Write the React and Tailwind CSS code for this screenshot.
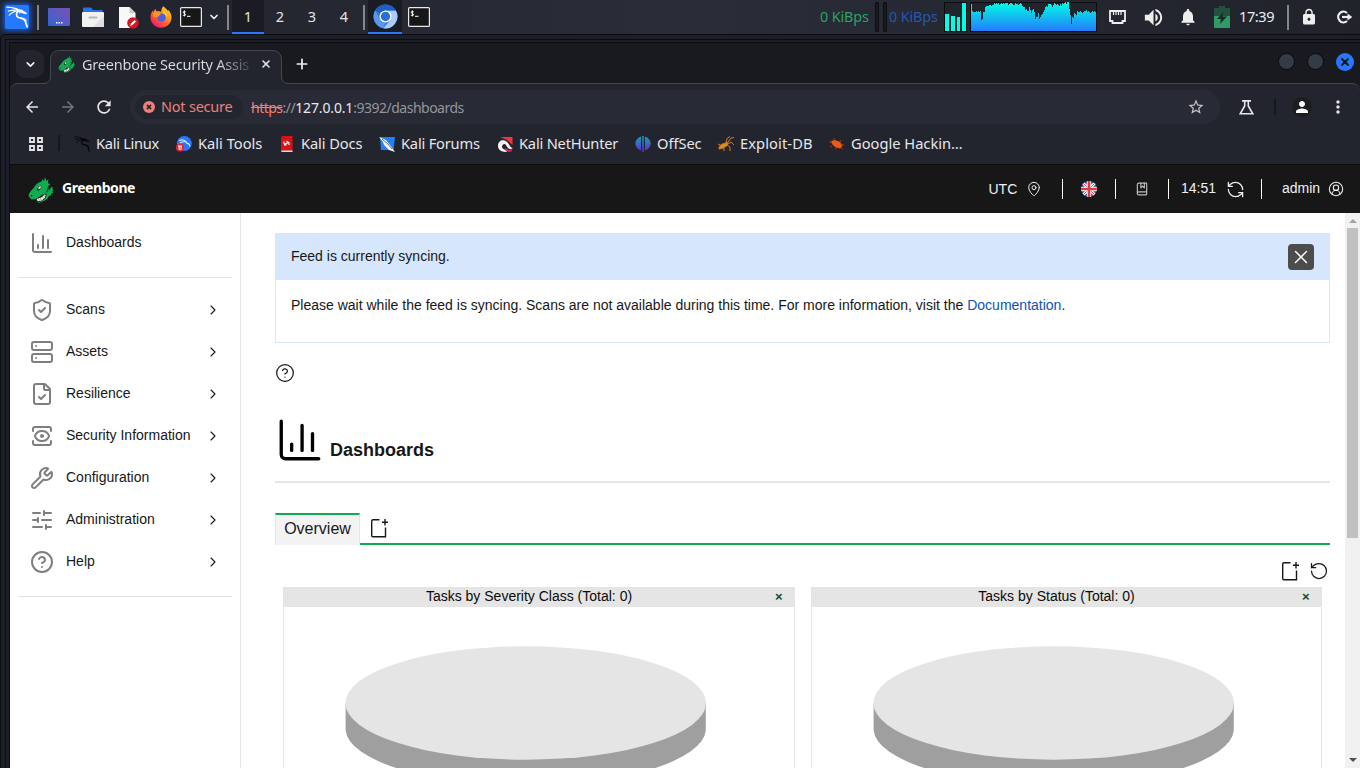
import React from "react";
import {
  ChartColumn, ShieldCheck, Server, FileCheck, View, Wrench, SlidersHorizontal,
  CircleHelp, ChevronRight, ChevronDown, MapPin, BookMarked, RefreshCcw,
  CircleUserRound, RotateCcw, X, Plus,
} from "lucide-react";
import {
  MdArrowBack, MdArrowForward, MdRefresh, MdStarBorder, MdMoreVert, MdPerson,
  MdVolumeUp, MdNotifications, MdLock,
} from "react-icons/md";

const UI = "font-['Noto_Sans',sans-serif]";
const WEB = "font-['Liberation_Sans',Arial,sans-serif]";

function Sep({ className }) {
  return <div className={`h-[25px] w-[2px] shrink-0 bg-[#84868b] ${className}`} />;
}

function KaliDragon({ size, className }) {
  return (
    <svg className={className} width={size} height={size} viewBox="0 0 24 24" fill="none" stroke="currentColor" strokeLinecap="round">
      <path d="M1 1.200C6 1.500 11 2.300 14 4.300M2.500 5.500c4-1.200 8-1.300 11.500-.8M3.500 10c3-3 6.500-4.800 10.500-5" strokeWidth="1.300" />
      <path d="M14 4.500c-3 2.500-3.500 6.500-.5 8 3 1.200 5.500.5 7.200 3.500 1 2 1.300 4 2.300 6.500" strokeWidth="1.900" />
      <path d="M14 4.500c2-.8 4 0 5 1.200l3.500 2-.7 1-3-.9c-1.500-.6-2.500-.8-4-.3Z" fill="currentColor" strokeWidth=".8" />
      <path d="M17 13c2 .2 3.800 1 5.500 2.600" strokeWidth="1" />
    </svg>
  );
}

function TerminalIcon({ className }) {
  return (
    <svg className={`shrink-0 ${className}`} width="22" height="20" viewBox="0 0 22 20" fill="none">
      <rect x=".6" y=".6" width="20.8" height="18.8" rx="1" fill="#171717" stroke="#e8e8e8" strokeWidth="1.2" />
      <path d="M5.600 4.900C4.900 4.200 3.100 4.300 3.200 5.400S5.600 6.400 5.600 7.600 3.600 8.800 2.800 8M4.400 3.400v6M7 9.300h3.500" stroke="#fff" strokeWidth="1" />
    </svg>
  );
}

function FirefoxIcon({ className }) {
  return (
    <svg className={`shrink-0 ${className}`} width="22" height="22" viewBox="0 0 22 22">
      <defs>
        <linearGradient id="fx" x1="1" y1="0" x2=".2" y2="1">
          <stop offset="0" stopColor="#ffe14a" /><stop offset=".4" stopColor="#ff9a1f" /><stop offset=".75" stopColor="#ff4343" /><stop offset="1" stopColor="#e4127b" />
        </linearGradient>
      </defs>
      <path d="M13.500.3c1 1.500 3.300 2.600 4.500 4.700.3-.3.300-.800.200-1.300 2 2 3.300 4.800 3.300 7.800 0 5.800-4.600 10.200-10.500 10.200S.5 17.300.5 11.500C.5 8.800 1.300 6.300 2.800 4.500l.5 1.800C4 4.700 4.600 3.700 5.800 2.700c-.1 1 .2 1.900.8 2.500 1.700-.3 3.400.1 4.600.7C11.200 3.600 12 1.600 13.500.3Z" fill="url(#fx)" />
      <circle cx="11.500" cy="11.500" r="4.300" fill="#4b5fe0" />
      <path d="M3.500 6.500c2-.8 4.500-.5 5.500.3l2 1.400-1.700 1.400-1.500 1.400C6.500 12 6 10 3 11Z" fill="#ff9326" />
      <path d="M12.500 7.200c3 .5 4.500 2.800 4 5.300 1.500-2.800.5-6-2.700-7Z" fill="#ffc934" />
    </svg>
  );
}

function ChromiumIcon() {
  return (
    <svg width="25" height="25" viewBox="0 0 24 24">
      <circle cx="12" cy="12" r="11.500" fill="#3b78d8" />
      <path d="M12 12 2 6.300A11.500 11.500 0 0 1 22 6.300H12Z" fill="#1b60c4" />
      <path d="M2 6.300 7 15l5 3-2 5.300A11.500 11.500 0 0 1 2 6.300Z" fill="#5b95ee" />
      <path d="M12 6.500h10a11.500 11.500 0 0 1-12 16.800L17 15Z" fill="#adcbf8" />
      <circle cx="12" cy="12" r="5.800" fill="#fff" />
      <circle cx="12" cy="12" r="4.500" fill="#2470dd" />
    </svg>
  );
}

const LOAD = [27,20,19,19,19,20,19,20,19,20,11,12,19,19,24,25,25,25,26,26,25,26,26,28,27,28,27,28,26,27,28,27,28,27,28,28,28,26,27,28,28,27,26,26,28,27,27,26,27,28,27,25,24,24,21,22,20,20,24,21,18,21,22,19,12,14,14,18,12,14,16,17,19,21,24,25,24,27,27,27,26,24,26,28,27,26,27,26,25,27,25,28,27,28,29,27,29,29,22,16,7,14,13,18,17,16,20,19,19,20,19,18,19,20,20,21,19,20,19,18,19,20,19,20,19];

function LoadGraph() {
  const pts = LOAD.map((v, i) => `L${i} ${29 - v}h1`).join("");
  return (
    <svg className="ml-[3px] shrink-0" width="127" height="30" viewBox="-1 0 127 30">
      <defs>
        <linearGradient id="load" x1="0" y1="0" x2="0" y2="30" gradientUnits="userSpaceOnUse">
          <stop offset="0" stopColor="#00ffe5" /><stop offset=".5" stopColor="#13bbf0" /><stop offset="1" stopColor="#2777ff" />
        </linearGradient>
      </defs>
      <rect x="-.5" y=".5" width="126" height="29" fill="#22242c" stroke="#0d0e12" />
      <path shapeRendering="crispEdges" d={`M0 29${pts}V29Z`} fill="url(#load)" />
    </svg>
  );
}

function Workspace({ n, active }) {
  return (
    <div className={`flex h-[34px] w-8 items-center justify-center border-b-2 pt-px text-[14.500px] text-[#e4e5e8] ${active ? "border-[#2777ff] bg-[#1a1b23]" : "border-transparent"}`}>
      {n}
    </div>
  );
}

function Panel() {
  return (
    <div className={`flex h-[34px] shrink-0 items-center bg-linear-to-r from-[#20222b] via-[#2a2c38] to-[#20232a] ${UI}`}>
      <div className="ml-[5px] flex size-6 items-center justify-center rounded-[2px] bg-[#2479ff] text-white shadow-[0_0_5px_2px_#1555cc]">
        <KaliDragon size={22} />
      </div>
      <Sep className="ml-2" />
      <div className="ml-[9px] flex h-[18px] w-[22px] items-end justify-center rounded-[1px] bg-linear-to-tr from-[#2464d2] to-[#7650b5] pb-[2px]">
        <svg width="8" height="2"><path d="M1 0h1.500v1.500H1zM3.500 0H5v1.500H3.500zM6 0h1.500v1.500H6z" fill="#fff" /></svg>
      </div>
      <svg className="ml-3 shrink-0" width="22" height="21" viewBox="0 0 22 21">
        <path d="M1 1.500Q1 .5 2 .5h7l2 2.500h9.500v5H1Z" fill="#2674e8" />
        <rect y="5" width="22" height="15" rx="1" fill="#f1f1f1" />
        <path d="m22 9-11 11h10q1 0 1-1Z" fill="#dedede" />
        <rect x="6.500" y="9.500" width="9" height="2" rx="1" fill="#b8b8b8" />
      </svg>
      <svg className="ml-[14px] shrink-0" width="21" height="23" viewBox="0 0 21 23">
        <path d="M1 1h10.500l6 6v15H1Z" fill="#f8f8f8" /><path d="m11.500 1 6 6h-6Z" fill="#c9c9c9" />
        <circle cx="15" cy="17" r="5.800" fill="#d31620" /><path d="m12 20 1-2.500 3.500-3.500 1.500 1.500-3.500 3.500Z" fill="#fff" />
      </svg>
      <FirefoxIcon className="ml-[11px]" />
      <TerminalIcon className="ml-2" />
      <ChevronDown size={12} strokeWidth={3.500} className="ml-[6px] text-[#eee]" />
      <Sep className="ml-[7px]" />
      <div className="ml-[3px] flex">
        <Workspace n="1" active /><Workspace n="2" /><Workspace n="3" /><Workspace n="4" />
      </div>
      <Sep className="ml-[3px]" />
      <div className="ml-[3px] flex h-[34px] w-[34px] items-center justify-center border-b-2 border-[#2777ff] bg-[#1a1b23]">
        <ChromiumIcon />
      </div>
      <TerminalIcon className="ml-[6px]" />
      <div className="ml-auto flex h-[34px] items-center">
        <span className="w-[55px] text-[14.300px] tracking-[-0.1px] whitespace-nowrap text-[#29a567]">0 KiBps</span>
        <div className="h-[30px] w-[4px] rounded-[1px] border border-[#0c0d10] bg-[#1a1b20]" />
        <div className="ml-1 h-[30px] w-[4px] rounded-[1px] border border-[#0c0d10] bg-[#1a1b20]" />
        <span className="ml-[2px] w-[55px] text-[14.300px] tracking-[-0.1px] whitespace-nowrap text-[#2159b2]">0 KiBps</span>
        <div className="flex h-[30px] w-[23px] items-end gap-[2px] border border-[#0d0e12] bg-[#22242c]">
          <div className="h-[17px] w-1 bg-[#00ffe5]" />
          <div className="h-[15px] w-1 bg-[#00ffe5]" />
          <div className="h-[14px] w-1 bg-[#00ffe5]" />
          <div className="h-[28px] w-1 bg-[#00ffe5]" />
        </div>
        <LoadGraph />
        <svg className="ml-[12px]" width="17" height="14" viewBox="0 0 17 14" fill="none" stroke="#eee" strokeWidth="1.800">
          <path d="M1 1h15v10h-2.500v2h-10v-2H1Z" /><path d="M4.500 2v3M7 2v3M9.500 2v3M12 2v3" strokeWidth="1.200" />
        </svg>
        <MdVolumeUp size={23} className="ml-[16px] text-[#eee]" />
        <MdNotifications size={20} className="ml-[13px] text-[#eee]" />
        <svg className="ml-[16px]" width="16" height="23" viewBox="0 0 16 23">
          <path d="M5 0h6v2h5v9H0V2h5Z" fill="#24503f" /><path d="M0 10h16v11q0 1-1 1H1q-1 0-1-1Z" fill="#2f9a64" />
          <path d="M9.500 6 3 13h4l-1 5 7-7.500H8.500Z" fill="#172c27" />
        </svg>
        <span className="ml-[9px] w-[48px] text-[14.500px] tracking-[-0.4px] text-[#eceded]">17:39</span>
        <Sep className="" />
        <MdLock size={18} className="ml-[11px] text-[#eee]" />
        <svg className="mr-[7px] ml-[18px]" width="17" height="14" viewBox="0 0 17 14" fill="none" stroke="#eee" strokeWidth="2.200">
          <path d="M11 3A5.300 5.300 0 1 0 11 11" /><path d="M6 7h6.500" /><path d="m11.500 3.500 4.800 3.500-4.800 3.500Z" fill="#eee" stroke="none" />
        </svg>
      </div>
    </div>
  );
}

function Dragon({ size }) {
  return (
    <svg width={size} height={size} viewBox="0 0 26 26">
      <path d="M.8 19.500C.3 16 3.500 13.500 5.500 11c2-3.500 4.500-5.500 8-6.500L14.500 2l1.500 2L17 0l1.500 4 1.800-2-.3 4.500 2 .3-1.500 4 .5 3.200-3 3c-3 .3-5.500 1.200-7 3.500L7.500 22l-4 .5Z" fill="#11ab51" />
      <path d="m20.500 14.500 2.500-4 2-.8-.7 2.300 1.400 1-1.400 1.500 1 1.300-2 .8-.3 2-2 .2-1.700 3-3.300 2.200-4.500 1.800L9 25l4-1.500c3-1.500 4.500-3.500 5-7Z" fill="#11ab51" />
      <path d="m9 13.500.8-3.200 3.200-1.700.2 2.200-2 2.500Z" fill="#171717" />
      <path d="m10.300 12.600.4-2.500 2-1v2Z" fill="#fff" />
      <path d="M8.300 22.500 10 20.800l3.500-.8 3-3 1.800.5-1 3.500-3.800 3-4 .8Z" fill="#fff" stroke="#171717" strokeWidth=".9" />
      <path d="m10.500 21.500.7 2.200m1.300-2.700.8 2.200m1-3.500 1.200 2m0-3.500 1.500 1.300" stroke="#555" strokeWidth=".6" />
      <circle cx="3.500" cy="18.700" r=".8" fill="#152018" />
      <path d="M20.500 8.500 20 12l-1.800 3.500" stroke="#152018" strokeWidth=".8" fill="none" />
    </svg>
  );
}

function TabStrip() {
  return (
    <div className="flex h-10 shrink-0 items-end bg-[#191a1f]">
      <div className="mb-[5px] ml-[6px] flex size-7 items-center justify-center rounded-[9px] bg-[#23252e]">
        <ChevronDown size={13} strokeWidth={3} className="text-[#eee]" />
      </div>
      <div className="relative z-10 -mb-px ml-[6px] flex h-[34px] w-[232px] items-center rounded-t-[9px] border border-b-0 border-[#45474e] bg-[#23252e] pb-[8px]">
        <svg className="absolute bottom-0 -left-[8px]" width="8" height="8" viewBox="0 0 8 8"><path d="M8 0v8H0Q7.500 7.500 8 0Z" fill="#23252e" /><path d="M0 7.500Q7.500 7.500 7.500 0" fill="none" stroke="#45474e" /></svg>
        <svg className="absolute -right-[8px] bottom-0" width="8" height="8" viewBox="0 0 8 8"><path d="M0 0v8h8Q.5 7.500 0 0Z" fill="#23252e" /><path d="M8 7.500Q.5 7.500.5 0" fill="none" stroke="#45474e" /></svg>
        <span className="mt-[2px] ml-[7px] flex"><Dragon size={17} /></span>
        <span className={`ml-[7px] w-[169px] bg-linear-to-r from-[#dcdde0] from-80% to-[#dcdde020] to-100% bg-clip-text text-[14.500px] leading-[20px] tracking-[-0.22px] whitespace-nowrap text-transparent ${UI}`}>Greenbone Security Assis</span>
        <X size={12} strokeWidth={3.200} className="ml-[9px] text-[#e4e4e6]" />
      </div>
      <Plus size={16} strokeWidth={2.600} className="mb-[11px] ml-[12px] text-[#eee]" />
      <div className="mr-[6px] mb-[12px] ml-auto flex gap-3">
        <span className="size-[17px] rounded-full border border-[#08090b] bg-[#353a47]" />
        <span className="size-[17px] rounded-full border border-[#08090b] bg-[#353a47]" />
        <span className="flex size-[18px] items-center justify-center rounded-full bg-[#2777ff] text-[#10131c]"><X size={12} strokeWidth={4} /></span>
      </div>
    </div>
  );
}

function Toolbar() {
  return (
    <div className={`flex h-12 shrink-0 items-center rounded-t-[8px] border-t border-[#45474e] bg-[#23252e] pb-px ${UI}`}>
      <MdArrowBack size={18} className="ml-[13px] text-[#e6e6e8]" />
      <MdArrowForward size={18} className="ml-[18px] text-[#73757b]" />
      <MdRefresh size={20} className="ml-[17px] text-[#e6e6e8]" />
      <div className="ml-[16px] flex h-[34px] w-[1090px] items-center rounded-full bg-[#282a36]">
        <div className="ml-[5px] flex h-6 w-[108px] items-center rounded-full bg-[#23252e]">
          <svg className="ml-[8px]" width="12" height="12" viewBox="0 0 12 12"><circle cx="6" cy="6" r="6" fill="#ee8079" /><path d="m3.900 3.900 4.200 4.200m0-4.200L3.900 8.100" stroke="#23252e" strokeWidth="1.600" /></svg>
          <span className="ml-[6px] text-[14.500px] tracking-[-0.22px] whitespace-nowrap text-[#e8827c]">Not secure</span>
        </div>
        <span className="ml-[8px] text-[14px] tracking-[-0.5px] whitespace-nowrap text-[#94969c]">
          <span className="text-[#ee8079] line-through">https</span>://<span className="tracking-[-0.15px] text-[#e8e9eb]">127.0.0.1</span>:9392/dashboards
        </span>
        <MdStarBorder size={18} className="mr-[15px] ml-auto text-[#c4c5c9]" />
      </div>
      <svg className="ml-[19px]" width="15" height="15" viewBox="0 0 15 15" fill="none" stroke="#e6e6e8" strokeWidth="1.600"><path d="M3 .9h9M5.700 1v5L1.200 13.800h12.600L9.300 6V1" /></svg>
      <div className="ml-[20px] h-4 w-[2px] bg-[#16171c]" />
      <span className="ml-[16px] flex size-5 items-center justify-center rounded-full bg-[#1c1d1e]"><MdPerson size={18} className="text-white" /></span>
      <MdMoreVert size={20} className="ml-[16px] text-[#e6e6e8]" />
    </div>
  );
}

const svg16 = { width: 16, height: 16, viewBox: "0 0 16 16" };

const BOOKMARKS = [
  { label: "Kali Linux", w: "w-[102px] tracking-[-0.3px]", icon: <KaliDragon size={16} className="text-[#050608]" /> },
  { label: "Kali Tools", w: "w-[103px]", icon: (
    <svg {...svg16}><circle cx="8.300" cy="7.500" r="7.500" fill="#2777ff" /><path d="M3 4.500c4-1.500 7 0 8 3 2-.5 2.500 1 3 3M4 7c2-1.500 4-1.500 6-1" fill="none" stroke="#d6e6ff" strokeWidth="1.100" /><circle cx="4" cy="11.500" r="4" fill="#e32636" /><path d="M2 10h4M3.200 10v4M5 10v4" stroke="#fff" strokeWidth="1" /></svg>) },
  { label: "Kali Docs", w: "w-[100px] tracking-[-0.1px]", icon: (
    <svg {...svg16}><path d="M3 0h10.500v16H2V2Z" fill="#d61417" /><path d="M2.500 14.500h11V16h-11Z" fill="#e8dcdc" /><path d="M5 5.500v2q1.200 1.200 2.500 0t2.500-.5v2M7.500 5 10 7M5 9h2.500" stroke="#fff" strokeWidth="1.100" fill="none" /></svg>) },
  { label: "Kali Forums", w: "w-[118px] tracking-[-0.2px]", icon: (
    <svg {...svg16}><path d="M1 1h15l-1.500 13H2Z" fill="#2180f2" /><path d="m0 1 7 3 4 5 5 7-6-2-5-5-1-3Z" fill="#f4f4f4" /><path d="m3 3 6 5 4 5" stroke="#444" strokeWidth=".7" fill="none" /></svg>) },
  { label: "Kali NetHunter", w: "w-[138px] tracking-[-0.2px]", icon: (
    <svg {...svg16}><path d="M3 1h12.500v8L10 4Z" fill="#f4333c" /><path d="M1 10c0-6 6-7 9-4s3 6 6 6c-4 3-6-1-7-3S5 8 5 11s5 2 5 4-9 1-9-5Z" fill="#f7f7f7" /><path d="m8 13 4 2 3-1" stroke="#d92455" strokeWidth="2" /></svg>) },
  { label: "OffSec", w: "w-[83px] tracking-[-0.05px]", icon: (
    <svg {...svg16}><defs><linearGradient id="os" x1="0" y1="0" x2="0" y2="16" gradientUnits="userSpaceOnUse"><stop stopColor="#15a5ab" /><stop offset="1" stopColor="#6226dc" /></linearGradient></defs><path d="M6 .5v14C-1.500 12-1.500 3 6 .500ZM10 .5v14c7.500-2.500 7.500-11.500 0-14ZM7.200 0h1.600v16H7.200Z" fill="url(#os)" /></svg>) },
  { label: "Exploit-DB", w: "w-[111px] tracking-[0.1px]", icon: (
    <svg {...svg16} fill="none" stroke="#d5801d" strokeWidth="1"><path d="M1 13c0-4 3-5 5-5.500l4-1-1 3-4 2.500Z" fill="#e58a1f" /><path d="M8 7 9 2.500l3-2M10 6l3-4 3-.5M10 8l3-2 3 3M9 9l3 2v4M6 11v4M2 9 0 8" /></svg>) },
  { label: "Google Hackin…", w: "w-[140px]", icon: (
    <svg {...svg16}><path d="m2 5 4-1 5 2 2.500 4-2.500 2.500L6 11 3 8Z" fill="#ee5a10" /><path d="M0 6h3M3 10l-2 1M8 12l-2 1M11 4l1 2M15 9l-3-1M5 2v2M12 12l2 1" stroke="#9c3d10" strokeWidth="1" /></svg>) },
];

function Bookmarks() {
  return (
    <div className={`flex h-[34px] shrink-0 items-center border-b border-[#0b0b0d] bg-[#23252e] pb-[9px] text-[14.670px] text-[#e6e7ea] ${UI}`}>
      <svg className="mt-px ml-[19px]" width="14" height="14" viewBox="0 0 14 14" fill="none" stroke="#e6e6e8" strokeWidth="1.800"><path d="M1 1h4v4H1zM9 1h4v4H9zM1 9h4v4H1zM9 9h4v4H9z" /></svg>
      <div className="mr-[14px] ml-[15px] h-4 w-[2px] bg-[#16171c]" />
      {BOOKMARKS.map((b) => (
        <div key={b.label} className={`flex shrink-0 items-center gap-[6px] whitespace-nowrap ${b.w}`}>
          <span className="mt-px shrink-0">{b.icon}</span><span className="-mt-px">{b.label}</span>
        </div>
      ))}
    </div>
  );
}

function Flag() {
  return (
    <svg width="16" height="16" viewBox="0 0 16 16">
      <defs><clipPath id="fl"><circle cx="8" cy="8" r="8" /></clipPath></defs>
      <g clipPath="url(#fl)">
        <path d="M0 0h16v16H0Z" fill="#2a4ba0" />
        <path d="m0 0 16 16M16 0 0 16" stroke="#fff" strokeWidth="3" /><path d="m0 0 16 16M16 0 0 16" stroke="#e0393e" strokeWidth="1" />
        <path d="M8 0v16M0 8h16" stroke="#fff" strokeWidth="4.400" /><path d="M8 0v16M0 8h16" stroke="#e0393e" strokeWidth="2.600" />
      </g>
    </svg>
  );
}

function AppHeader() {
  return (
    <header className={`flex h-12 shrink-0 items-center bg-[#171717] text-[14px] text-[#f0f0f0] ${WEB}`}>
      <span className="mt-[2px] ml-[18px]"><Dragon size={26} /></span>
      <span className={`mb-[3px] ml-2 text-[14px] font-bold tracking-[-0.45px] text-white ${UI}`}>Greenbone</span>
      <div className="ml-auto flex h-5 items-center">
        <span className="w-[38px] pl-[0.5px]">UTC</span>
        <MapPin size={16} strokeWidth={1.500} />
        <div className="mr-[18px] ml-5 h-5 w-px bg-white" />
        <Flag />
        <div className="mr-[19px] ml-[18px] h-5 w-px bg-white" />
        <BookMarked size={14} strokeWidth={2} className="text-[#bdbdbd]" />
        <div className="mr-[12px] ml-[19px] h-5 w-px bg-white" />
        <span className="mb-[2px] w-[45px]">14:51</span>
        <RefreshCcw size={19} strokeWidth={1.600} className="-ml-[0.5px]" />
        <div className="mr-[20px] ml-[16.500px] h-5 w-px bg-white" />
        <span className="mb-[2px] w-[46px]">admin</span>
        <CircleUserRound size={16} strokeWidth={1.600} className="mr-[16px]" />
      </div>
    </header>
  );
}

const NAV = [
  ["Scans", ShieldCheck], ["Assets", Server], ["Resilience", FileCheck],
  ["Security Information", View], ["Configuration", Wrench],
  ["Administration", SlidersHorizontal], ["Help", CircleHelp],
];

function NavRow({ label, Icon, arrow }) {
  return (
    <div className="flex h-[42px] items-center pr-[11px] pl-3">
      <Icon size={24} strokeWidth={2} className="shrink-0 text-[#7f7f7f]" />
      <span className="mb-[2px] ml-3">{label}</span>
      {arrow && <ChevronRight size={16} strokeWidth={1.700} className="ml-auto text-[#1c1c1c]" />}
    </div>
  );
}

function Sidebar() {
  return (
    <nav className="w-[231px] shrink-0 border-r border-[#e5e5e5] px-2 pt-[9px] text-[14px] text-[#171717]">
      <NavRow label="Dashboards" Icon={ChartColumn} />
      <div className="mt-[13px] h-px bg-[#e3e3e3]" />
      <div className="mt-[11px]">
        {NAV.map(([label, Icon]) => <NavRow key={label} label={label} Icon={Icon} arrow />)}
      </div>
      <div className="mt-[13px] h-px bg-[#e3e3e3]" />
    </nav>
  );
}

function NewIcon() {
  return (
    <svg width="18" height="20" viewBox="0 0 18 20" fill="none" stroke="#171717" strokeWidth="1.400">
      <path d="M9.500 1.700H3Q1.700 1.700 1.700 3v14.500q0 1.300 1.300 1.300h12.500V9.500" /><path d="M15 1v6.500M12 4.200h6" />
    </svg>
  );
}

function Card({ title, className }) {
  return (
    <section className={`h-[300px] border-x border-[#e5e5e5] ${className}`}>
      <div className="-mx-px flex h-5 items-center bg-[#e5e5e5] pb-[2px] text-[14px] text-[#0a0a0a]">
        <span className="flex-1 pr-[1px] text-center">{title}</span>
        <span className="mt-[2px] -ml-px w-5 text-[13px] font-bold text-[#104e2a]">×</span>
      </div>
      <svg className="mt-[39px] ml-[61px] block" width="362" height="150" viewBox="0 0 362 150">
        <path d="M.6 57v27.500a180.200 56.700 0 0 0 360.200 0V57Z" fill="#9f9f9f" />
        <ellipse cx="180.700" cy="57" rx="180.300" ry="56.700" fill="#e5e5e5" />
      </svg>
    </section>
  );
}

function Main() {
  return (
    <main className="min-w-0 flex-1 overflow-hidden pt-5 pr-[15px] pl-[34px] text-[14px] text-[#171717]">
      <div className="h-[110px] border border-[#d6e6fd]">
        <div className="flex h-[46px] items-center justify-between bg-[#d6e6fd] pr-[15px] pl-[15px]">
          <span className="mb-[2px]">Feed is currently syncing.</span>
          <button className="flex size-[26px] items-center justify-center rounded-[4px] bg-[#4c4c4c] text-white"><X size={22} strokeWidth={1.600} /></button>
        </div>
        <p className="mt-[15px] pl-[15px] leading-5">Please wait while the feed is syncing. Scans are not available during this time. For more information, visit the <span className="text-[#0a55b8]">Documentation</span>.</p>
      </div>
      <CircleHelp size={20} strokeWidth={1.500} className="mt-5" />
      <div className="mt-8 flex h-[68px] border-b-2 border-[#e5e5e5]">
        <ChartColumn size={50} strokeWidth={1.600} className="text-black" />
        <h1 className="mt-[25px] ml-[5px] text-[18px] leading-5 font-bold">Dashboards</h1>
      </div>
      <div className="mt-[30px] flex h-8">
        <div className="flex w-[85px] items-center justify-center border-x border-t-2 border-x-[#e5e5e5] border-t-[#11ab51] bg-[#f3f3f3] pb-[2px] text-[16px]">Overview</div>
        <div className="flex flex-1 items-center border-b-2 border-[#11ab51] pl-[10px]"><NewIcon /></div>
      </div>
      <div className="mt-4 flex h-[26px] items-start justify-end gap-[10px] pr-px">
        <NewIcon /><RotateCcw size={20} strokeWidth={1.500} />
      </div>
      <div className="flex gap-4 pl-2">
        <Card title="Tasks by Severity Class (Total: 0)" className="w-[512px]" />
        <Card title="Tasks by Status (Total: 0)" className="w-[511px]" />
      </div>
    </main>
  );
}

function Scrollbar() {
  return (
    <div className="flex w-[15px] shrink-0 flex-col items-center bg-[#f1f1f1]">
      <svg className="mt-[6px] mb-[5px]" width="8" height="4"><path d="M0 4 4 0l4 4Z" fill="#a3a3a3" /></svg>
      <div className="h-[310px] w-[11px] bg-[#c1c1c1]" />
      <svg className="mt-auto mb-[6px]" width="8" height="4"><path d="M0 0h8L4 4Z" fill="#505050" /></svg>
    </div>
  );
}

export default function App() {
  return (
    <div className="flex h-[768px] w-[1360px] flex-col overflow-hidden bg-[#23252e]">
      <Panel />
      <div className="flex min-h-0 flex-1 flex-col rounded-tl-[5px] border-t border-l border-[#0b0c10] bg-[#1d1f28] pt-[4px] pl-[4px]">
        <div className="flex min-h-0 flex-1 flex-col border-t border-l border-[#0b0c10] pt-[2px] pl-[3px]">
          <div className="flex min-h-0 flex-1 flex-col border-t border-l border-[#0b0c10]">
            <TabStrip />
            <div className="flex flex-col bg-[#191a1f]"><Toolbar /></div>
            <Bookmarks />
            <AppHeader />
            <div className={`flex min-h-0 flex-1 bg-white ${WEB}`}>
              <Sidebar /><Main /><Scrollbar />
            </div>
          </div>
        </div>
      </div>
    </div>
  );
}
